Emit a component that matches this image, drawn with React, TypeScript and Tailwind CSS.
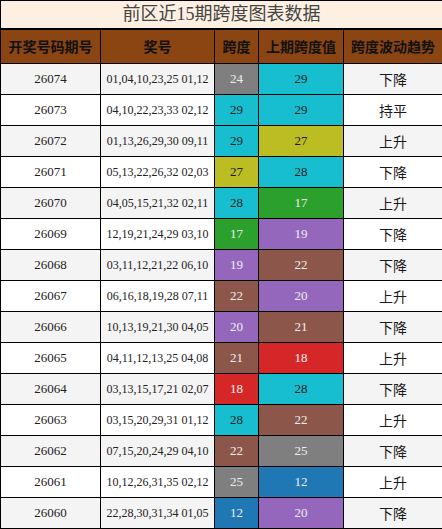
const C: Record<string, string> = {
  gray: "bg-[#7f7f7f] text-[#eeeeee]",
  cyan: "bg-[#17becf] text-[#1a1a1a]",
  olive: "bg-[#bcbd22] text-[#1a1a1a]",
  green: "bg-[#2ca02c] text-[#eeeeee]",
  purple: "bg-[#9467bd] text-[#eeeeee]",
  brown: "bg-[#8c564b] text-[#eeeeee]",
  red: "bg-[#d62728] text-[#eeeeee]",
  blue: "bg-[#1f77b4] text-[#eeeeee]",
};

const colorOf = (v: number) => {
  if (v === 24 || v === 25) return C.gray;
  if (v === 29 || v === 28) return C.cyan;
  if (v === 27) return C.olive;
  if (v === 17) return C.green;
  if (v === 19 || v === 20) return C.purple;
  if (v === 22 || v === 21) return C.brown;
  if (v === 18) return C.red;
  return C.blue;
};

const rows: [string, string, number, number, string][] = [
  ["26074", "01,04,10,23,25 01,12", 24, 29, "下降"],
  ["26073", "04,10,22,23,33 02,12", 29, 29, "持平"],
  ["26072", "01,13,26,29,30 09,11", 29, 27, "上升"],
  ["26071", "05,13,22,26,32 02,03", 27, 28, "下降"],
  ["26070", "04,05,15,21,32 02,11", 28, 17, "上升"],
  ["26069", "12,19,21,24,29 03,10", 17, 19, "下降"],
  ["26068", "03,11,12,21,22 06,10", 19, 22, "下降"],
  ["26067", "06,16,18,19,28 07,11", 22, 20, "上升"],
  ["26066", "10,13,19,21,30 04,05", 20, 21, "下降"],
  ["26065", "04,11,12,13,25 04,08", 21, 18, "上升"],
  ["26064", "03,13,15,17,21 02,07", 18, 28, "下降"],
  ["26063", "03,15,20,29,31 01,12", 28, 22, "上升"],
  ["26062", "07,15,20,24,29 04,10", 22, 25, "下降"],
  ["26061", "10,12,26,31,35 02,12", 25, 12, "上升"],
  ["26060", "22,28,30,31,34 01,05", 12, 20, "下降"],
];

const serif = "font-['Liberation_Serif','Noto_Sans_CJK_SC',serif]";
const cjk = "font-['Noto_Sans_CJK_SC',sans-serif]";

export default function App() {
  return (
    <div className="w-[442px] h-[529px] bg-white">
      <table className="w-[442px] border-collapse table-fixed text-center">
        <colgroup>
          <col className="w-[100px]" />
          <col className="w-[114px]" />
          <col className="w-[44px]" />
          <col className="w-[85px]" />
          <col className="w-[99px]" />
        </colgroup>
        <thead>
          <tr className="h-[28px]">
            <th colSpan={5} className={`border border-black border-b-2 bg-[#fdf0e2] text-[#444444] text-[18px] font-normal leading-none ${serif}`}>
              前区近15期跨度图表数据
            </th>
          </tr>
          <tr className="h-[35px] bg-[#8b4513]">
            {["开奖号码期号", "奖号", "跨度", "上期跨度值", "跨度波动趋势"].map((h) => (
              <th key={h} className={`border border-black text-[14px] font-bold text-[#111111] ${cjk}`}>
                {h}
              </th>
            ))}
          </tr>
        </thead>
        <tbody>
          {rows.map(([id, nums, span, prev, trend], i) => (
            <tr key={id} className={`h-[31px] ${i % 2 === 0 ? "bg-[#f4f4f4]" : "bg-white"}`}>
              <td className={`border border-black text-[13px] text-[#222222] ${serif}`}>{id}</td>
              <td className={`border border-black text-[12px] text-[#222222] whitespace-nowrap ${serif}`}>{nums}</td>
              <td className={`border border-black text-[13px] ${colorOf(span)} ${serif}`}>{span}</td>
              <td className={`border border-black text-[13px] ${colorOf(prev)} ${serif}`}>{prev}</td>
              <td className={`border border-black text-[14px] font-normal text-[#1a1a1a] ${cjk}`}>{trend}</td>
            </tr>
          ))}
        </tbody>
      </table>
    </div>
  );
}
